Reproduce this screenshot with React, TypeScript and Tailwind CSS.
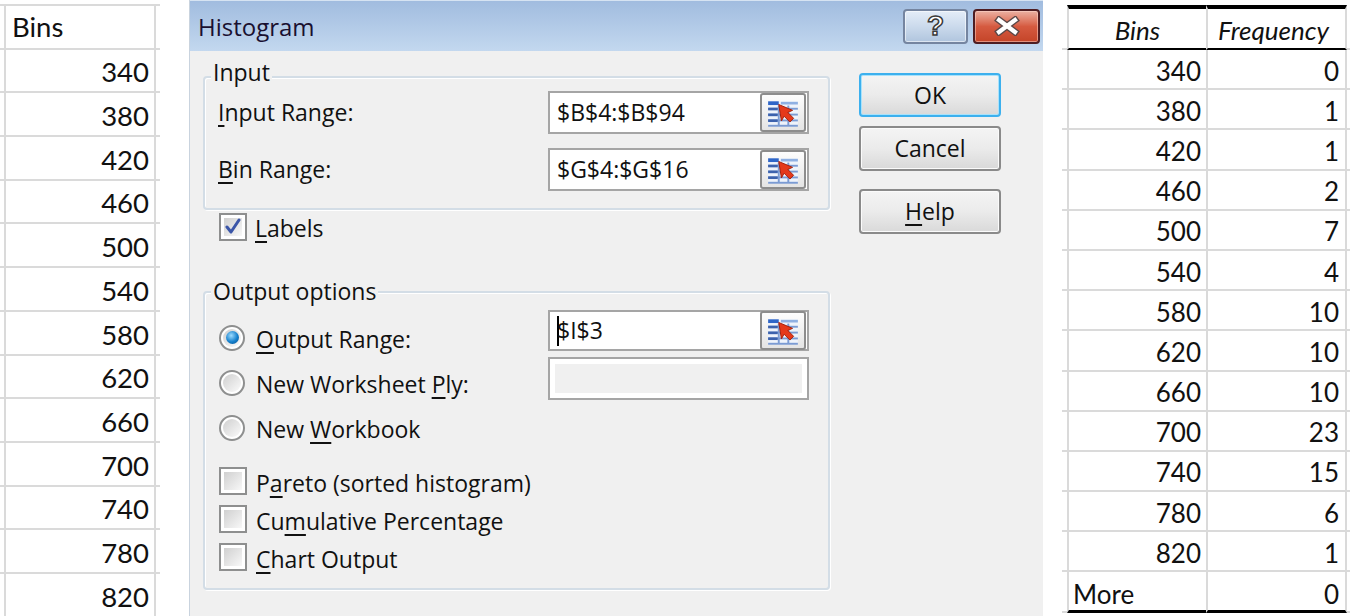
import React from "react";

const leftRows = ["340", "380", "420", "460", "500", "540", "580", "620", "660", "700", "740", "780", "820"];
const rightRows: [string, string][] = [
  ["340", "0"], ["380", "1"], ["420", "1"], ["460", "2"], ["500", "7"], ["540", "4"], ["580", "10"],
  ["620", "10"], ["660", "10"], ["700", "23"], ["740", "15"], ["780", "6"], ["820", "1"], ["More", "0"],
];

function U({ children }: { children: React.ReactNode }) {
  return <span className="underline decoration-[1.5px] underline-offset-[4px]">{children}</span>;
}

function SheetLeft() {
  return (
    <div className="w-[189px] shrink-0 pt-[4px] font-['Lato',sans-serif] text-[27.5px] text-[#111]">
      <div className="w-[160px] border-t-2 border-[#dadada]">
        {["Bins", ...leftRows].map((v, i) => (
          <div key={i} className="h-[43.7px] border-b-2 border-[#dadada] pl-[4px] flex">
            <div
              className={
                i === 0
                  ? "w-[152px] h-full border-x-2 border-[#dadada] flex items-center justify-start pl-[6px]"
                  : "w-[152px] h-full border-x-2 border-[#dadada] flex items-center justify-end pr-[5px] pt-[3px]"
              }
            >
              {v}
            </div>
          </div>
        ))}
      </div>
    </div>
  );
}

function SheetRight() {
  return (
    <div className="flex-1 pl-[19px] pt-[5px] font-['Lato',sans-serif] text-[26px] text-[#111]">
      <div className="flex h-[45px]">
        <div className="w-[5px] border-b-2 border-b-[#dadada]" />
        <div className="w-[139px] border-l-2 border-l-[#dadada] border-t-4 border-t-black border-b-2 border-b-black italic flex items-center justify-center pt-[4px]">
          Bins
        </div>
        <div className="w-[141px] border-l-2 border-l-[#dadada] border-r-2 border-r-[#dadada] border-t-4 border-t-black border-b-2 border-b-black italic flex items-center justify-center pt-[4px] pr-[6px]">
          Frequency
        </div>
        <div className="flex-1 border-b-2 border-b-[#dadada]" />
      </div>
      {rightRows.map(([a, b], i) => {
        const last = i === rightRows.length - 1;
        return (
          <div key={i} className="flex h-[40.2px]">
            <div className="w-[5px] border-b-2 border-b-[#dadada]" />
            <div
              className={
                (last ? "border-b-[3px] border-b-black justify-start pl-[4px] pt-[7px] " : "border-b-2 border-b-[#dadada] justify-end pr-[5px] pt-[4px] ") +
                "w-[139px] border-l-2 border-l-[#dadada] flex items-center"
              }
            >
              {a}
            </div>
            <div
              className={
                (last ? "border-b-[3px] border-b-black pt-[7px] " : "border-b-2 border-b-[#dadada] pt-[4px] ") +
                "w-[141px] border-l-2 border-l-[#dadada] border-r-2 border-r-[#dadada] flex items-center justify-end pr-[6px]"
              }
            >
              {b}
            </div>
            <div className="flex-1 border-b-2 border-b-[#dadada]" />
          </div>
        );
      })}
    </div>
  );
}

function RefIcon() {
  return (
    <svg width="34" height="28" viewBox="0 0 32 26">
      <rect x="2" y="2" width="28" height="23" fill="#eef3fb" />
      <rect x="2" y="2" width="10" height="3.5" fill="#2f66c8" />
      <rect x="14" y="2.5" width="16" height="2.5" fill="#8fb0e2" />
      <g stroke="#7b9bd3" strokeWidth="1.8">
        <line x1="2" y1="9" x2="30" y2="9" />
        <line x1="2" y1="14.5" x2="30" y2="14.5" />
        <line x1="2" y1="20" x2="30" y2="20" />
        <line x1="2" y1="25" x2="30" y2="25" />
        <line x1="12" y1="6" x2="12" y2="25" />
        <line x1="21" y1="6" x2="21" y2="25" />
      </g>
      <rect x="2" y="8" width="9" height="2.5" fill="#3c62ad" />
      <rect x="2" y="13.5" width="9" height="2.5" fill="#3c62ad" />
      <rect x="2" y="19" width="9" height="2.5" fill="#3c62ad" />
      <polygon
        points="12,5 25,10.5 20.5,12.5 26,18 22.5,21.5 17,16 14.5,20.5"
        fill="#e5391a"
        stroke="#a3200b"
        strokeWidth="0.9"
        strokeLinejoin="round"
      />
    </svg>
  );
}

function RefBtn() {
  return (
    <div className="w-[46px] h-[39px] mr-[1px] rounded-[3px] border-2 border-[#8d8d8d] bg-linear-to-b from-[#fdfdfd] to-[#e4e4e4] flex items-center justify-center">
      <RefIcon />
    </div>
  );
}

function Field({ value, caret }: { value: string; caret?: boolean }) {
  return (
    <div className="w-[261px] h-full border-2 border-[#a5a5a5] bg-white flex items-center justify-between">
      <div className="pl-[7px] flex items-center">
        {caret && <span className="inline-block w-[2px] h-[30px] bg-black -mr-[2px]" />}
        <span>{value}</span>
      </div>
      <RefBtn />
    </div>
  );
}

function Checkbox({ checked }: { checked?: boolean }) {
  return (
    <div className="w-[28px] h-[28px] shrink-0 border-2 border-[#8e8f8f] bg-white p-[3px]">
      <div className="w-full h-full bg-linear-to-br from-[#d0d0d0] to-[#f8f8f8] flex items-center justify-center">
        {checked && (
          <svg width="18" height="18" viewBox="0 0 18 18">
            <path d="M3 9 L7 14 L15 2" fill="none" stroke="#3b56a8" strokeWidth="3" strokeLinecap="round" strokeLinejoin="round" />
          </svg>
        )}
      </div>
    </div>
  );
}

function Radio({ checked }: { checked?: boolean }) {
  return (
    <div className="w-[26px] h-[26px] shrink-0 rounded-full border-2 border-[#8e8f8f] bg-white p-[2px]">
      <div className="w-full h-full rounded-full bg-linear-to-br from-[#cfcfcf] to-[#fbfbfb] flex items-center justify-center">
        {checked && (
          <div className="w-[13px] h-[13px] rounded-full bg-[radial-gradient(circle_at_40%_35%,#9edcff,#1580cc_55%,#0b4f8c)]" />
        )}
      </div>
    </div>
  );
}

function Button({ children, focused }: { children: React.ReactNode; focused?: boolean }) {
  return (
    <div
      className={
        (focused
          ? "border-2 border-[#3cb0ee] shadow-[inset_0_0_0_1px_#a8e2fb] "
          : "border-2 border-[#8a8a8a] shadow-[inset_0_0_0_1px_#fbfbfb] ") +
        "w-[142px] h-full rounded-[4px] bg-linear-to-b from-[#f4f4f4] via-[#ebebeb] to-[#d9d9d9] flex items-center justify-center"
      }
    >
      {children}
    </div>
  );
}

function TitleBar() {
  return (
    <div className="h-[51px] bg-linear-to-b from-[#a1bcdf] to-[#c3d8ef] border-t border-[#d6e3f2] flex items-center pl-[8px] pr-[3px]">
      <div className="flex-1 text-[24px] text-[#1a1030] pt-[2px]">Histogram</div>
      <div className="w-[65px] h-[35px] rounded-[4px] border-2 border-[#7585a0] bg-linear-to-b from-[#e4edf8] via-[#cbdaec] to-[#b0c5de] shadow-[inset_0_0_0_1px_rgba(255,255,255,0.55)] flex items-center justify-center">
        <span className="font-['Liberation_Sans',sans-serif] font-bold text-[28px] leading-none text-white [-webkit-text-stroke:1.5px_#3a3a3a]">?</span>
      </div>
      <div className="w-[67px] h-[35px] ml-[5px] rounded-[4px] border-2 border-[#4e1d22] bg-linear-to-b from-[#eab0a2] via-[#d55a40] to-[#c44428] shadow-[inset_0_0_0_1px_rgba(255,220,210,0.5)] flex items-center justify-center">
        <svg width="30" height="20" viewBox="0 0 30 20">
          <g strokeLinecap="square">
            <path d="M7 4 L23 16 M23 4 L7 16" stroke="#5a4848" strokeWidth="7" />
            <path d="M7 4 L23 16 M23 4 L7 16" stroke="#ffffff" strokeWidth="4.2" />
          </g>
        </svg>
      </div>
    </div>
  );
}

function GroupBox({
  label,
  labelTop,
  className,
  children,
}: {
  label: string;
  labelTop: string;
  className: string;
  children: React.ReactNode;
}) {
  return (
    <div
      className={
        "relative rounded-[4px] border-2 border-[#d3dde6] shadow-[1px_1px_0_#ffffff,inset_1px_1px_0_#ffffff] " + className
      }
    >
      <div className={"absolute left-[6px] px-[2px] bg-[#f0f0f0] leading-[28px] " + labelTop}>{label}</div>
      {children}
    </div>
  );
}

function Dialog() {
  return (
    <div className="w-[854px] h-[616px] shrink-0 bg-[#f0f0f0] font-['Open_Sans',sans-serif] text-[23px] text-[#111] flex flex-col border-l border-[#c9d3de]">
      <TitleBar />
      <div className="flex pl-[13px]">
        <div className="w-[627px]">
          <GroupBox label="Input" labelTop="-top-[20px]" className="mt-[25px] pt-[13px] pb-[17px] pl-[13px] pr-[19px]">
            <div className="flex items-center h-[43px]">
              <div className="flex-1">
                <U>I</U>nput Range:
              </div>
              <Field value="$B$4:$B$94" />
            </div>
            <div className="flex items-center h-[43px] mt-[14px]">
              <div className="flex-1">
                <U>B</U>in Range:
              </div>
              <Field value="$G$4:$G$16" />
            </div>
          </GroupBox>
          <div className="flex items-center h-[29px] mt-[2px] pl-[16px] gap-[8px]">
            <Checkbox checked />
            <span className="pt-[4px]">
              <U>L</U>abels
            </span>
          </div>
          <GroupBox label="Output options" labelTop="-top-[16px]" className="mt-[50px] pt-[17px] pb-[12px] pl-[14px] pr-[19px]">
            <div className="flex items-start">
              <div className="flex-1 pt-[5px]">
                <div className="flex items-center h-[45px] gap-[11px]">
                  <Radio checked />
                  <span className="pt-[3px]">
                    <U>O</U>utput Range:
                  </span>
                </div>
                <div className="flex items-center h-[45px] gap-[11px]">
                  <Radio />
                  <span className="pt-[3px]">
                    New Worksheet <U>P</U>ly:
                  </span>
                </div>
                <div className="flex items-center h-[45px] gap-[11px]">
                  <Radio />
                  <span className="pt-[3px]">
                    New <U>W</U>orkbook
                  </span>
                </div>
              </div>
              <div className="w-[261px]">
                <div className="h-[41px]">
                  <Field value="$I$3" caret />
                </div>
                <div className="h-[43px] mt-[6px] border-2 border-[#a5a5a5] bg-white p-[5px]">
                  <div className="w-full h-full bg-[#f0f0f0]" />
                </div>
              </div>
            </div>
            <div className="mt-[12px]">
              <div className="flex items-center h-[38px] gap-[9px]">
                <Checkbox />
                <span className="pt-[4px]">
                  P<U>a</U>reto (sorted histogram)
                </span>
              </div>
              <div className="flex items-center h-[38px] gap-[9px]">
                <Checkbox />
                <span className="pt-[4px]">
                  Cu<U>m</U>ulative Percentage
                </span>
              </div>
              <div className="flex items-center h-[38px] gap-[9px]">
                <Checkbox />
                <span className="pt-[4px]">
                  <U>C</U>hart Output
                </span>
              </div>
            </div>
          </GroupBox>
        </div>
        <div className="ml-[29px] mt-[22px] flex flex-col">
          <div className="h-[44px]">
            <Button focused>OK</Button>
          </div>
          <div className="h-[45px] mt-[9px]">
            <Button>Cancel</Button>
          </div>
          <div className="h-[45px] mt-[18px]">
            <Button>
              <span>
                <U>H</U>elp
              </span>
            </Button>
          </div>
        </div>
      </div>
    </div>
  );
}

export default function App() {
  return (
    <div className="w-[1350px] h-[616px] overflow-hidden bg-white flex">
      <SheetLeft />
      <Dialog />
      <SheetRight />
    </div>
  );
}
